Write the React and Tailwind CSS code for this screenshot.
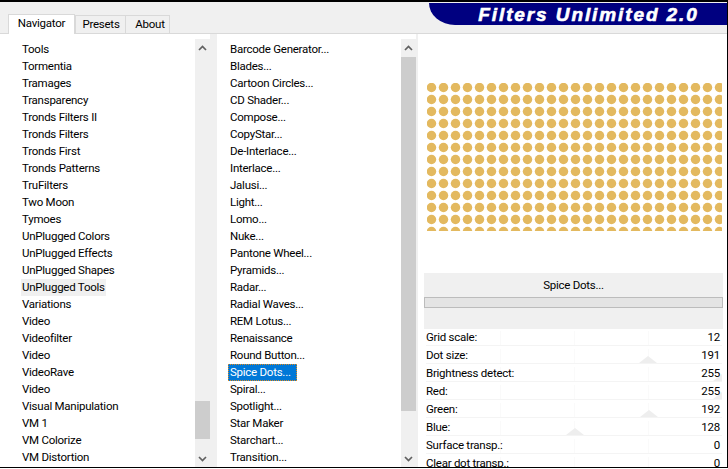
const left = ["Tools","Tormentia","Tramages","Transparency","Tronds Filters II","Tronds Filters","Tronds First","Tronds Patterns","TruFilters","Two Moon","Tymoes","UnPlugged Colors","UnPlugged Effects","UnPlugged Shapes","UnPlugged Tools","Variations","Video","Videofilter","Video","VideoRave","Video","Visual Manipulation","VM 1","VM Colorize","VM Distortion"];
const mid = ["Barcode Generator...","Blades...","Cartoon Circles...","CD Shader...","Compose...","CopyStar...","De-Interlace...","Interlace...","Jalusi...","Light...","Lomo...","Nuke...","Pantone Wheel...","Pyramids...","Radar...","Radial Waves...","REM Lotus...","Renaissance","Round Button...","Spice Dots...","Spiral...","Spotlight...","Star Maker","Starchart...","Transition..."];
const params = [["Grid scale:",12,false],["Dot size:",191,true],["Brightness detect:",255,true],["Red:",255,true],["Green:",192,true],["Blue:",128,true],["Surface transp.:",0,false],["Clear dot transp.:",0,false]];
const Chevron = ({ up }) => (
  <svg width="9" height="6" viewBox="0 0 9 6" className="block">
    <path d={up ? "M1 5 L4.5 1.5 L8 5" : "M1 1 L4.5 4.5 L8 1"} fill="none" stroke="#606060" strokeWidth="1.7" />
  </svg>
);
function Scrollbar({ top, height }) {
  return (
    <div className="w-[15px] shrink-0 bg-[#f0f0f0] flex flex-col h-full">
      <div className="h-[18px] flex items-center justify-center shrink-0"><Chevron up /></div>
      <div className="flex-1 relative">
        <div className="absolute left-0 right-0 bg-[#cdcdcd]" style={{ top, height }} />
      </div>
      <div className="h-[17px] flex items-center justify-center shrink-0"><Chevron /></div>
    </div>
  );
}
const Dots = () => {
  const cols = Array.from({ length: 25 });
  const rows = Array.from({ length: 13 });
  return (
    <svg width="295" height="148" className="block">
      {rows.map((_, r) => cols.map((_, c) => (
        <circle key={r + "-" + c} cx={4.5 + c * 12} cy={4.5 + r * 12} r="4.75" fill="#e3b95f" />
      )))}
    </svg>
  );
};
export default function App() {
  return (
    <div className="w-[728px] h-[468px] bg-[#f0f0f0] border-t-2 border-r border-b border-black overflow-hidden font-['Roboto',Arial,sans-serif] text-[11.5px] tracking-[-0.25px] text-black flex flex-col">
      <div className="h-[32px] shrink-0 flex justify-between border-b border-[#d9d9d9] relative">
        <div className="flex items-end pl-[8px]">
          <div className="w-[67px] h-[20px] bg-white border border-b-0 border-[#d9d9d9] flex items-center justify-center -mb-px relative pb-[2px]">Navigator</div>
          <div className="w-[51px] h-[18px] bg-[#f0f0f0] border border-b-0 border-[#d9d9d9] flex items-center justify-center pt-px pl-px">Presets</div>
          <div className="w-[44px] h-[18px] bg-[#f0f0f0] border border-l-0 border-b-0 border-[#d9d9d9] flex items-center justify-center pt-px pl-[5px]">About</div>
        </div>
        <div className="w-[298px] h-[22px] mt-px bg-[#000080] rounded-bl-[26px_22px] flex items-center justify-center pl-[21px]">
          <span className="text-white italic font-bold text-[19px] tracking-[1.9px] leading-none font-['Liberation_Sans',Arial,sans-serif] [-webkit-text-stroke:0.6px_white]">Filters Unlimited 2.0</span>
        </div>
      </div>
      <div className="flex-1 min-h-0 flex bg-white pl-[9px]">
        <div className="w-[201px] shrink-0 flex pt-[5px] h-full">
          <div className="flex-1 pl-[13px] pt-[2px] overflow-hidden">
            {left.map((t, i) => (
              <div key={i} className={"h-[17px] leading-[17px] whitespace-nowrap " + (t === "UnPlugged Tools" ? "bg-[#f0f0f0] -ml-px pl-px w-[85px]" : "")}>{t}</div>
            ))}
          </div>
          <Scrollbar top={344} height={38} />
        </div>
        <div className="w-[7px] bg-[#f0f0f0] shrink-0 h-full" />
        <div className="w-[199px] shrink-0 flex pt-[5px] h-full">
          <div className="flex-1 pl-[13px] pt-[2px] overflow-hidden">
            {mid.map((t, i) => (
              <div key={i} className={"h-[17px] leading-[17px] whitespace-nowrap " + (t === "Spice Dots..." ? "bg-[#0078d7] text-white w-[69px] -ml-[2px] pl-[2px] outline-1 outline-dotted outline-[#e08a1e] -outline-offset-1" : "")}>{t}</div>
            ))}
          </div>
          <Scrollbar top={0} height={354} />
        </div>
        <div className="w-[2px] bg-[#f0f0f0] shrink-0 h-full" />
        <div className="flex-1 min-w-0 flex flex-col">
          <div className="h-[239px] shrink-0 pt-[49px] pl-[9px] overflow-hidden">
            <Dots />
          </div>
          <div className="bg-[#f0f0f0] h-[56px] shrink-0 ml-[6px] mr-[4px] flex flex-col">
            <div className="h-[24px] flex items-center justify-center pt-[2px]">Spice Dots...</div>
            <div className="h-[11px] bg-[#e4e4e4] border border-[#bcbcbc]" />
          </div>
          <div className="flex-1 ml-[8px] mr-[5px] -mt-px overflow-hidden">
            {params.map(([l, v, thumb], i) => (
              <div key={i} className="h-[18px] relative flex justify-between items-center border-b border-[#f4f4f4] pr-[2px] pt-[2px]">
                <div className="absolute bottom-0 left-1/4 w-px h-[14px] bg-[#fafafa]" />
                <div className="absolute bottom-0 left-1/2 w-px h-[14px] bg-[#fafafa]" />
                <div className="absolute bottom-0 left-3/4 w-px h-[14px] bg-[#fafafa]" />
                {thumb && <div className="absolute bottom-0 w-0 h-0 -ml-[9px] border-x-[9px] border-x-transparent border-b-[7px] border-b-[#eeeeee]" style={{ left: (v / 255) * 100 + "%" }} />}
                <span className="relative">{l}</span>
                <span className="relative">{v}</span>
              </div>
            ))}
          </div>
        </div>
      </div>
    </div>
  );
}
